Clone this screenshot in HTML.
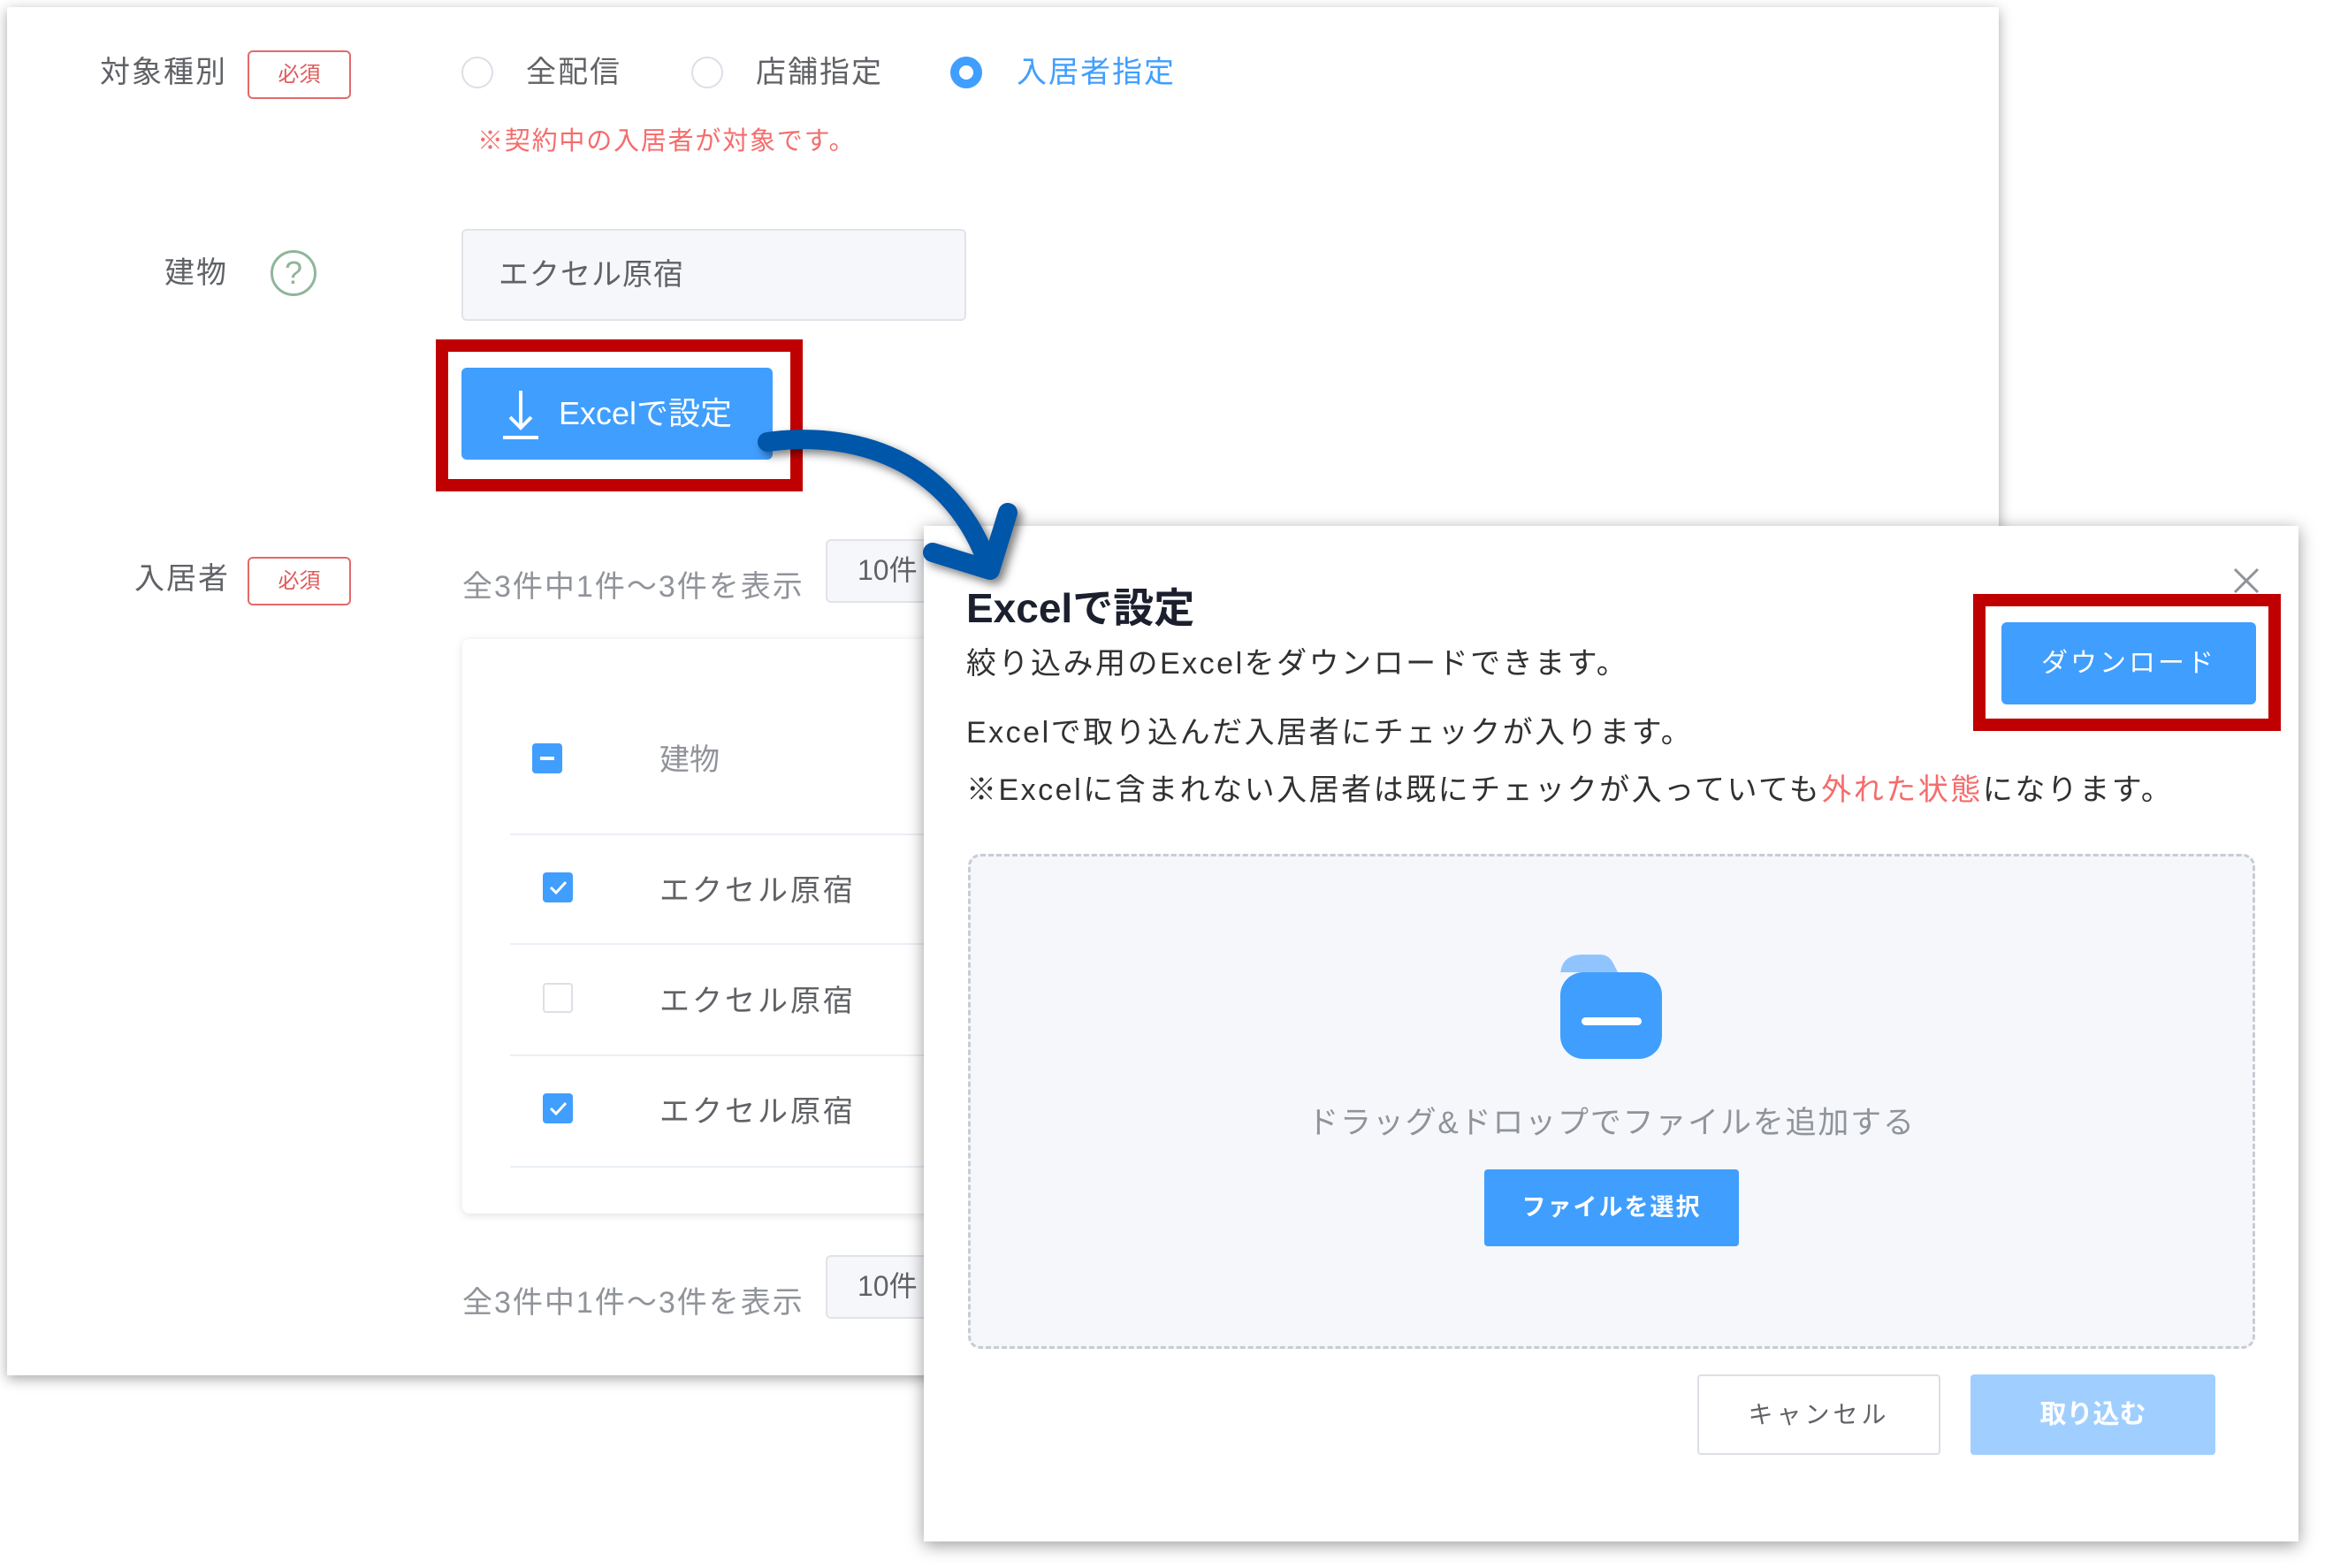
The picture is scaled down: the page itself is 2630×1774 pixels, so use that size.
<!DOCTYPE html>
<html><head><meta charset="utf-8"><style>
*{margin:0;padding:0;box-sizing:border-box}
body{width:2630px;height:1774px;background:#fff;position:relative;overflow:hidden;font-family:"Liberation Sans","Noto Sans CJK JP",sans-serif;color:#606266}
.a{position:absolute;white-space:nowrap}
.card{left:8px;top:8px;width:2253px;height:1548px;background:#fff;box-shadow:0 4px 14px rgba(0,0,0,.35)}
.lbl{font-size:34px;color:#606266;line-height:1;letter-spacing:2px}
.badge{width:117px;height:55px;border:2px solid #e26a6a;border-radius:6px;color:#e05a5a;font-size:24px;text-align:center;line-height:51px}
.radio{width:36px;height:36px;border:2px solid #dcdfe6;border-radius:50%;background:#fff}
.sel{border:2px solid #e1e3e8;background:#f5f7fa;border-radius:6px;font-size:32px;color:#606266}
.cb{width:34px;height:34px;border-radius:4px;background:#409eff}
.ln{height:2px;background:#ebeef5;left:577px;width:500px}
.modal{left:1045px;top:595px;width:1555px;height:1149px;background:#fff;box-shadow:0 4px 18px rgba(0,0,0,.4)}
.t{font-size:34px;color:#303133;line-height:1;letter-spacing:2.5px}
</style></head><body>
<div class="a card"></div>
<div class="a lbl" style="left:113px;top:65px">対象種別</div>
<div class="a badge" style="left:280px;top:57px">必須</div>
<div class="a radio" style="left:522px;top:64px"></div>
<div class="a lbl" style="left:595px;top:65px;color:#606266">全配信</div>
<div class="a radio" style="left:782px;top:64px"></div>
<div class="a lbl" style="left:855px;top:65px">店舗指定</div>
<div class="a radio" style="left:1075px;top:64px;border:10px solid #409eff"></div>
<div class="a lbl" style="left:1150px;top:65px;color:#409eff">入居者指定</div>
<div class="a" style="left:540px;top:136px;font-size:29px;color:#f56c6c;letter-spacing:1.8px">※契約中の入居者が対象です。</div>

<div class="a lbl" style="left:186px;top:292px">建物</div>
<div class="a" style="left:306px;top:283px;width:52px;height:52px;border:3px solid #8fb59a;border-radius:50%;color:#8fb59a;font-size:36px;text-align:center;line-height:46px">?</div>
<div class="a sel" style="left:522px;top:259px;width:571px;height:104px;padding-left:40px;line-height:100px;font-size:34px;letter-spacing:1px">エクセル原宿</div>

<div class="a" style="left:493px;top:384px;width:415px;height:172px;border:14px solid #c00000"></div>
<div class="a" style="left:522px;top:416px;width:352px;height:104px;background:#409eff;border-radius:6px;color:#fff;font-size:36px;line-height:104px;padding-left:110px">Excelで設定</div>
<svg class="a" style="left:565px;top:440px" width="50" height="60"><path d="M24 2V44M12 32L24 44L36 32" stroke="#fff" stroke-width="4" fill="none"/><path d="M4 55H44" stroke="#fff" stroke-width="4"/></svg>

<div class="a lbl" style="left:152px;top:638px">入居者</div>
<div class="a badge" style="left:280px;top:630px">必須</div>
<div class="a" style="left:523px;top:636px;font-size:34px;color:#909399;letter-spacing:2px">全3件中1件〜3件を表示</div>
<div class="a sel" style="left:934px;top:610px;width:200px;height:72px;padding-left:34px;line-height:66px">10件</div>
<div class="a" style="left:523px;top:723px;width:600px;height:650px;background:#fff;border-radius:8px;box-shadow:0 2px 10px rgba(0,0,0,.12)"></div>
<div class="a cb" style="left:602px;top:841px"></div><div class="a" style="left:611px;top:856px;width:16px;height:4px;background:#fff"></div>
<div class="a" style="left:746px;top:832px;font-size:34px;color:#909399">建物</div>
<div class="a ln" style="top:943px"></div>
<div class="a ln" style="top:1067px"></div>
<div class="a ln" style="top:1193px"></div>
<div class="a ln" style="top:1319px"></div>
<div class="a cb" style="left:614px;top:987px"></div>
<svg class="a" style="left:614px;top:987px" width="34" height="34"><path d="M9 17L15 23L26 11" stroke="#fff" stroke-width="3" fill="none"/></svg>
<div class="a cb" style="left:614px;top:1112px;background:#fff;border:2px solid #dcdfe6"></div>
<div class="a cb" style="left:614px;top:1237px"></div>
<svg class="a" style="left:614px;top:1237px" width="34" height="34"><path d="M9 17L15 23L26 11" stroke="#fff" stroke-width="3" fill="none"/></svg>
<div class="a" style="left:746px;top:980px;font-size:34px;color:#606266;letter-spacing:3px">エクセル原宿</div>
<div class="a" style="left:746px;top:1105px;font-size:34px;color:#606266;letter-spacing:3px">エクセル原宿</div>
<div class="a" style="left:746px;top:1230px;font-size:34px;color:#606266;letter-spacing:3px">エクセル原宿</div>
<div class="a" style="left:523px;top:1446px;font-size:34px;color:#909399;letter-spacing:2px">全3件中1件〜3件を表示</div>
<div class="a sel" style="left:934px;top:1420px;width:200px;height:72px;padding-left:34px;line-height:66px">10件</div>

<div class="a modal"></div>
<div class="a" style="left:1093px;top:652px;font-size:46px;font-weight:bold;color:#1b1f2e">Excelで設定</div>
<svg class="a" style="left:2526px;top:642px" width="30" height="30"><path d="M2 2L28 28M28 2L2 28" stroke="#909399" stroke-width="3"/></svg>
<div class="a t" style="left:1093px;top:734px">絞り込み用のExcelをダウンロードできます。</div>
<div class="a t" style="left:1093px;top:812px">Excelで取り込んだ入居者にチェックが入ります。</div>
<div class="a t" style="left:1093px;top:877px">※Excelに含まれない入居者は既にチェックが入っていても<span style="color:#f56c6c">外れた状態</span>になります。</div>
<div class="a" style="left:2232px;top:672px;width:348px;height:155px;border:14px solid #c00000"></div>
<div class="a" style="left:2264px;top:704px;width:288px;height:93px;background:#409eff;border-radius:6px;color:#fff;font-size:30px;text-align:center;line-height:93px;letter-spacing:3px">ダウンロード</div>
<div class="a" style="left:1095px;top:966px;width:1456px;height:560px;background:#f5f7fa;border:3px dashed #c8ccd4;border-radius:14px"></div>
<svg class="a" style="left:1760px;top:1075px" width="130" height="130"><path d="M5 30Q5 5 30 5H50Q60 5 65 15L70 25H5Z" fill="#8fc4ff"/><rect x="5" y="25" width="115" height="98" rx="26" fill="#409eff"/><rect x="29" y="76" width="68" height="9" rx="4.5" fill="#fff"/></svg>
<div class="a" style="left:1423px;top:1242px;width:800px;text-align:center;font-size:35px;color:#909399;letter-spacing:1.8px">ドラッグ&amp;ドロップでファイルを追加する</div>
<div class="a" style="left:1679px;top:1323px;width:288px;height:87px;background:#409eff;border-radius:4px;color:#fff;font-size:27px;text-align:center;line-height:87px;font-weight:bold;letter-spacing:2px">ファイルを選択</div>
<div class="a" style="left:1920px;top:1555px;width:275px;height:91px;border:2px solid #dcdfe6;border-radius:4px;color:#606266;font-size:28px;text-align:center;line-height:87px;letter-spacing:4px">キャンセル</div>
<div class="a" style="left:2229px;top:1555px;width:277px;height:91px;background:#a0cfff;border-radius:4px;color:#fff;font-size:30px;text-align:center;line-height:91px;font-weight:bold">取り込む</div>

<svg class="a" style="left:0;top:0" width="2630" height="1774">
<defs><filter id="sh" x="-20%" y="-20%" width="140%" height="140%"><feDropShadow dx="5" dy="5" stdDeviation="5" flood-color="#000" flood-opacity=".5"/></filter></defs>
<g filter="url(#sh)" stroke="#0457a8" stroke-width="22" stroke-linecap="round" stroke-linejoin="round" fill="none">
<path d="M868 500C980 485 1080 530 1118 640"/>
<path d="M1140 580L1120 645L1055 625"/>
</g></svg>
</body></html>
